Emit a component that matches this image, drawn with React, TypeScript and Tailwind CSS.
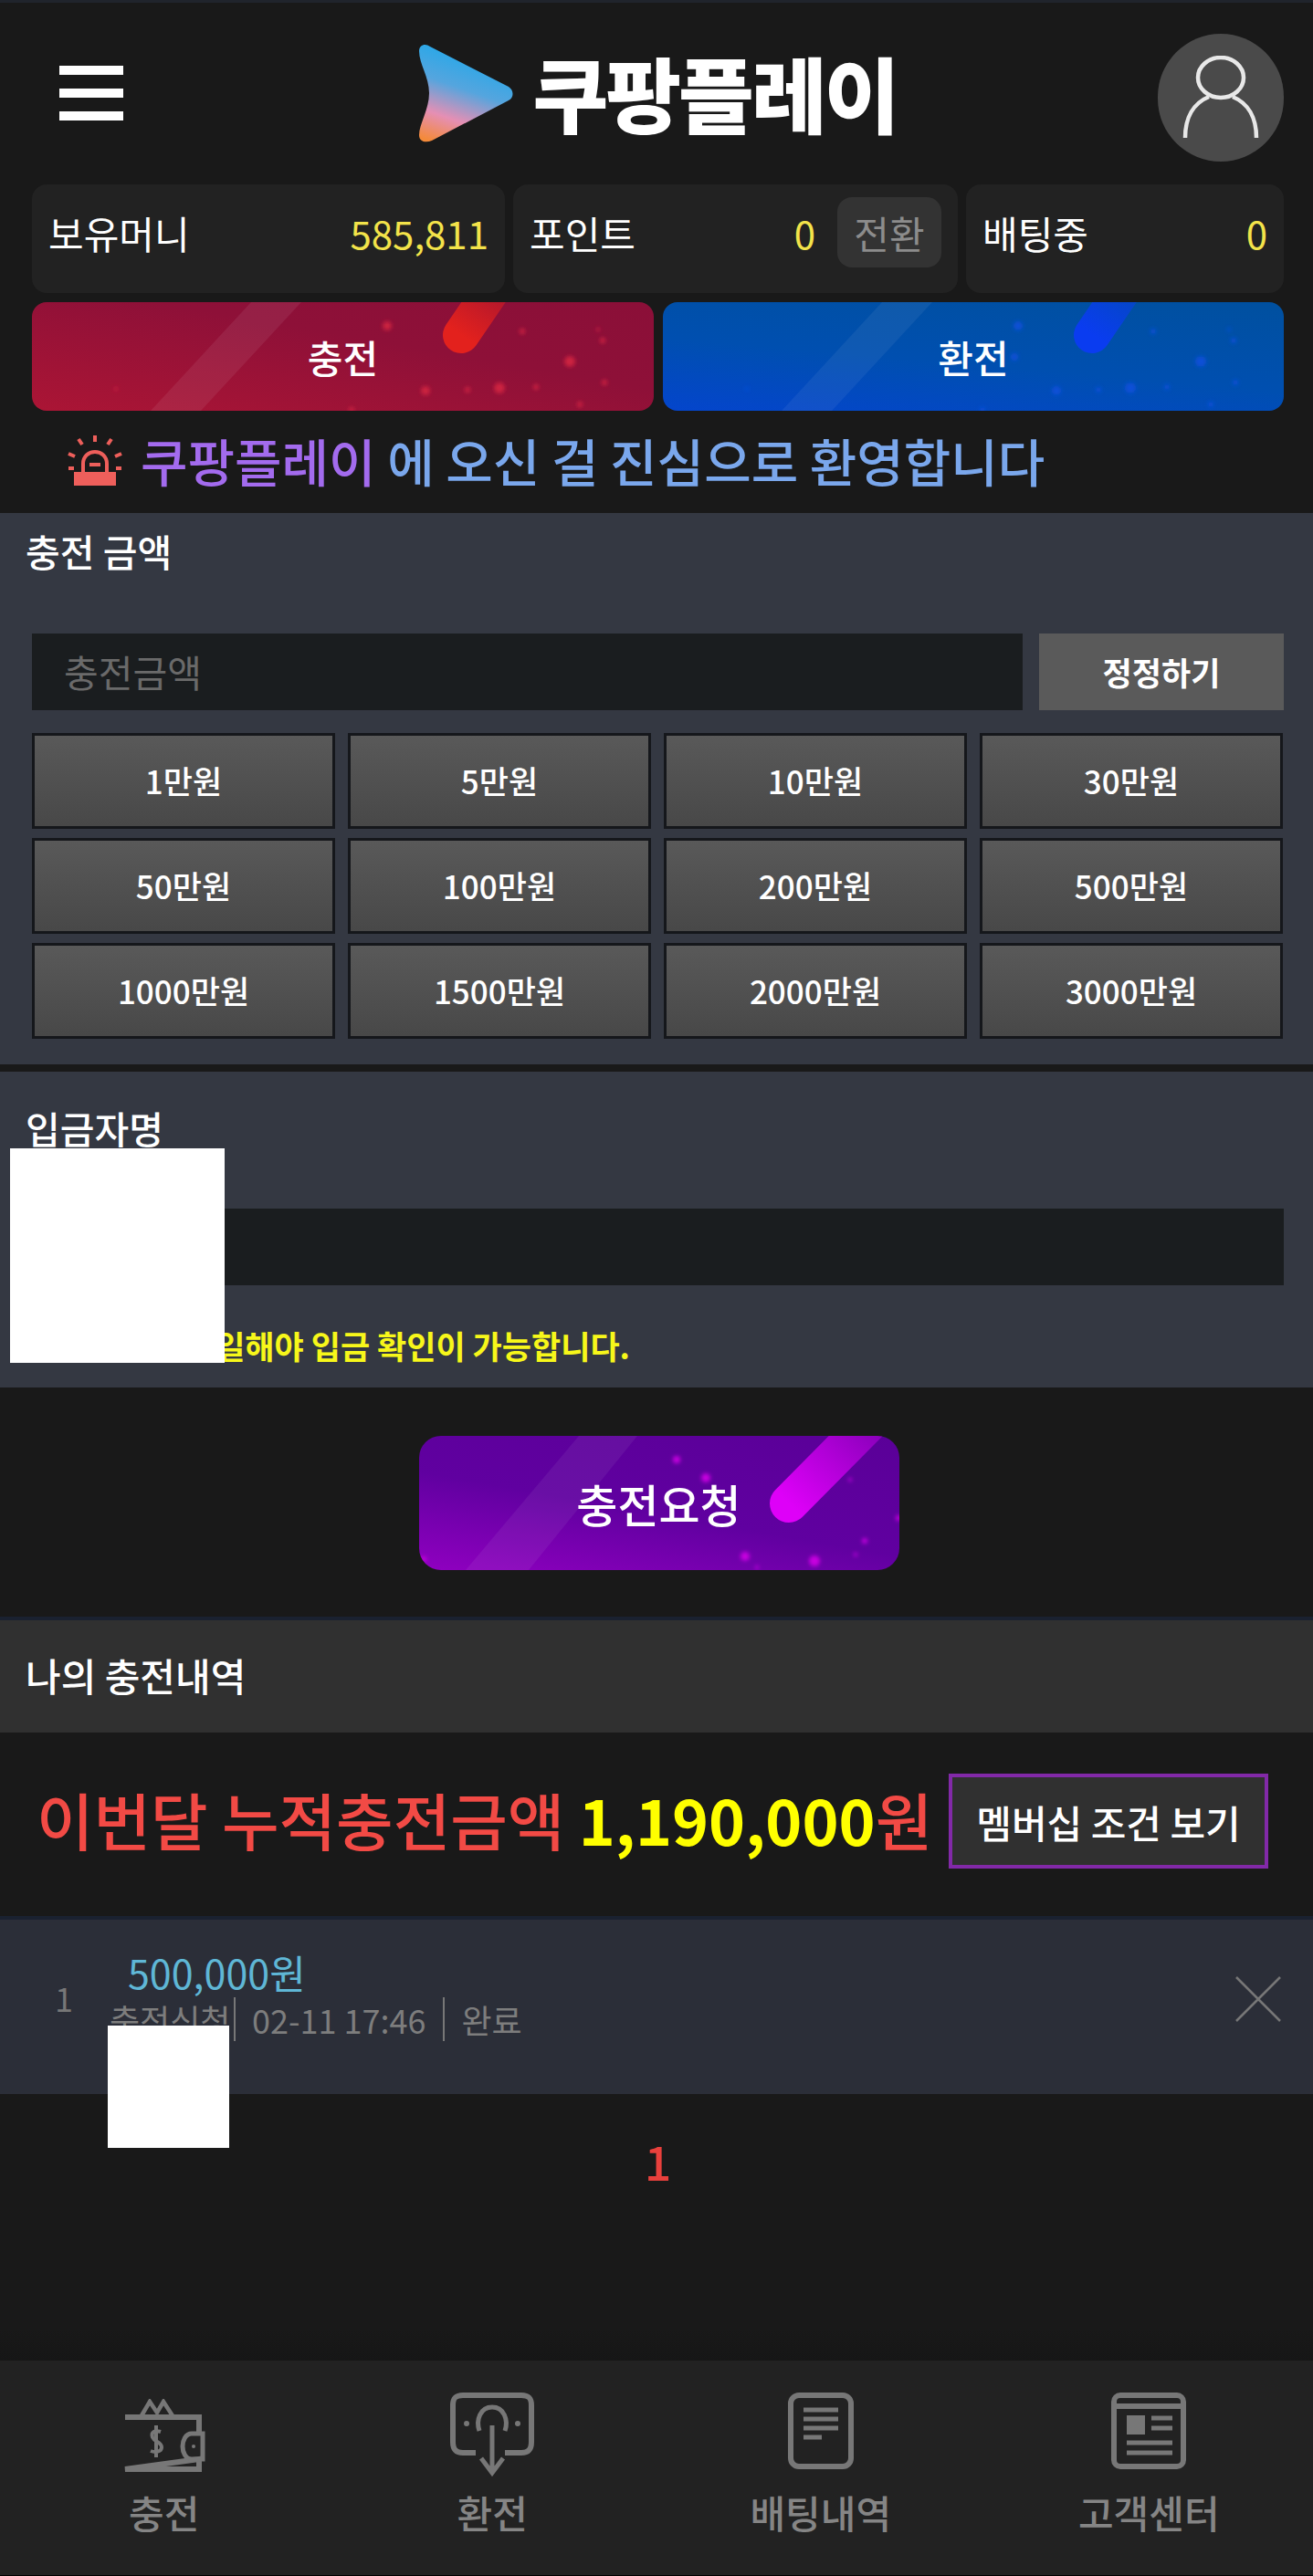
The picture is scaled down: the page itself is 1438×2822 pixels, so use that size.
import React from 'react';

const amounts = ['1만원', '5만원', '10만원', '30만원', '50만원', '100만원', '200만원', '500만원', '1000만원', '1500만원', '2000만원', '3000만원'];

interface SparkleProps {
  id: string;
  w: number;
  h: number;
  glow: string;
  dot: string;
  stripe: [number, number, number, number];
  stripeOpacity: number;
  pill: [number, number, number, number];
  pillWidth: number;
  dots: [number, number, number][];
}

// decoration baked into the coloured buttons
const Sparkle: React.FC<SparkleProps> = ({ id, w, h, glow, dot, stripe, stripeOpacity, pill, pillWidth, dots }) => (
  <svg viewBox={`0 0 ${w} ${h}`} className="absolute inset-0 w-full h-full" aria-hidden="true">
    <defs>
      <linearGradient id={id} x1={pill[0]} y1={pill[1]} x2={pill[2]} y2={pill[3]} gradientUnits="userSpaceOnUse">
        <stop offset="0" stopColor={glow} stopOpacity="0.25" />
        <stop offset="1" stopColor={glow} />
      </linearGradient>
      <filter id={`${id}-b`}>
        <feGaussianBlur stdDeviation="2" />
      </filter>
    </defs>
    <polygon points={`${stripe[0]},${h} ${stripe[1]},${h} ${stripe[3]},0 ${stripe[2]},0`} fill="#ffffff" fillOpacity={stripeOpacity} />
    <line x1={pill[0]} y1={pill[1]} x2={pill[2]} y2={pill[3]} stroke={`url(#${id})`} strokeWidth={pillWidth} strokeLinecap="round" />
    <g filter={`url(#${id}-b)`}>
      {dots.map(([x, y, r], i) => (
        <circle key={i} cx={x} cy={y} r={r} fill={dot} />
      ))}
    </g>
  </svg>
);

const redDots: [number, number, number][] = [[389, 26, 5], [537, 32, 3], [625, 42, 3], [589, 65, 6], [627, 88, 3], [431, 97, 5], [512, 94, 6], [477, 96, 3], [552, 93, 3], [600, 112, 3], [350, 118, 3], [620, 30, 2], [92, 95, 2]];
const blueDots: [number, number, number][] = [[389, 26, 5], [537, 32, 3], [625, 42, 3], [589, 65, 6], [627, 88, 3], [431, 97, 5], [512, 94, 6], [477, 96, 3], [552, 93, 3], [600, 112, 3], [350, 118, 3], [620, 30, 2], [92, 95, 2], [385, 60, 4]];
const purpleDots: [number, number, number][] = [[282, 26, 4], [314, 46, 5], [472, 48, 2], [525, 90, 3], [488, 115, 3], [357, 132, 5], [433, 137, 6], [478, 130, 2], [370, 144, 2], [5, 135, 3]];

const WalletIcon = () => (
  <svg viewBox="0 0 92 80" className="w-[92px] h-[80px]" fill="none" stroke="#777" strokeWidth="6">
    <path d="M20 20 L30 3 L38 15 L45 3 L56 20" strokeWidth="4.5" />
    <path d="M3 20 H84 V38 M84 66 V77 H3 Z" />
    <path d="M88 38 H76 C69 38 66 46 66 52 C66 58 69 66 76 66 H88 Z" strokeWidth="5" />
    <circle cx="78" cy="52" r="2" fill="#777" stroke="none" />
    <path d="M42 36 C36 34 31 36 33 42 C35 47 43 47 43 53 C43 58 36 59 31 57 M37 29 V64" strokeWidth="4" />
  </svg>
);

const ExchangeIcon = () => (
  <svg viewBox="0 0 92 92" className="w-[92px] h-[92px]" fill="none" stroke="#777" strokeWidth="6">
    <path d="M28 66 H14 C6 66 3 62 3 54 V14 C3 6 6 3 14 3 H78 C86 3 89 6 89 14 V54 C89 62 86 66 78 66 H60" />
    <path d="M32 42 C28 30 33 16 46 16 C59 16 64 30 60 42" strokeWidth="5" />
    <path d="M46 36 V86 M34 72 L46 88 L58 72" strokeWidth="5" />
    <circle cx="18" cy="34" r="3" fill="#777" stroke="none" />
    <circle cx="74" cy="34" r="3" fill="#777" stroke="none" />
  </svg>
);

const BetIcon = () => (
  <svg viewBox="0 0 72 84" className="w-[72px] h-[84px]" fill="none" stroke="#777" strokeWidth="6">
    <rect x="3" y="3" width="66" height="78" rx="9" />
    <path d="M17 19 H55 M17 29 H55 M17 39 H55 M17 49 H37" strokeWidth="5" />
  </svg>
);

const NewsIcon = () => (
  <svg viewBox="0 0 82 84" className="w-[82px] h-[84px]" fill="none" stroke="#777" strokeWidth="6">
    <rect x="3" y="3" width="76" height="78" rx="7" />
    <path d="M3 15 H79" />
    <rect x="17" y="25" width="20" height="21" fill="#777" stroke="none" />
    <path d="M44 28 H67 M44 39 H67 M17 55 H67 M17 66 H67" strokeWidth="5" />
  </svg>
);

const tabs = [
  { label: '충전', icon: <WalletIcon />, h: 'pt-[7px]' },
  { label: '환전', icon: <ExchangeIcon />, h: '' },
  { label: '배팅내역', icon: <BetIcon />, h: '' },
  { label: '고객센터', icon: <NewsIcon />, h: '' },
];

const App: React.FC = () => {
  return (
    <div className="relative w-[1438px] h-[2822px] flex flex-col bg-[#191919] text-white overflow-hidden [font-family:'Noto_Sans_CJK_KR','Noto_Sans',sans-serif]">
      {/* Header */}
      <div className="h-[202px] shrink-0 flex items-start justify-between border-t-[3px] border-[#20242c]">
        <div className="ml-[65px] mt-[69px] w-[70px] h-[60px] flex flex-col justify-between">
          <div className="h-[10px] bg-white"></div>
          <div className="h-[10px] bg-white"></div>
          <div className="h-[10px] bg-white"></div>
        </div>
        <div className="mt-[45px] ml-[36px] flex items-start gap-[22px]">
          <svg viewBox="0 0 105 108" className="w-[105px] h-[108px]">
            <defs>
              <linearGradient id="logo" x1="0.45" y1="0.1" x2="0.15" y2="1">
                <stop offset="0" stopColor="#2aa8e8" />
                <stop offset="0.35" stopColor="#55a5de" />
                <stop offset="0.7" stopColor="#e58fb4" />
                <stop offset="1" stopColor="#f48a3a" />
              </linearGradient>
            </defs>
            <path d="M2 8 C2 1 9 -1 14 3 L100 47 C106 51 106 59 100 62 L16 106 C9 109 2 107 2 100 C2 88 13 72 13 54 C13 36 2 22 2 8 Z" fill="url(#logo)" />
          </svg>
          <span className="text-[90px] leading-[100px] font-black tracking-[-3px] mt-[2px] whitespace-nowrap">쿠팡플레이</span>
        </div>
        <div className="mt-[34px] mr-[32px] w-[138px] h-[140px] rounded-full bg-[#4a4a4a] flex items-center justify-center">
          <svg viewBox="0 0 84 92" className="w-[84px] h-[92px]" fill="none" stroke="#e8e8e8" strokeWidth="4.5">
            <ellipse cx="42" cy="24" rx="25" ry="22" />
            <path d="M29 45 C12 52 3 68 3 90 M55 45 C72 52 81 68 81 90" />
          </svg>
        </div>
      </div>

      {/* Balance cards */}
      <div className="shrink-0 flex gap-[9px] pl-[35px] pr-[32px]">
        <div className="w-[518px] h-[119px] rounded-[16px] bg-[#222222] px-[18px] pt-[14px]">
          <div className="h-[77px] flex items-center justify-between text-[42px] leading-none">
            <span>보유머니</span>
            <span className="text-[#f3e34a]">585,811</span>
          </div>
        </div>
        <div className="w-[487px] h-[119px] rounded-[16px] bg-[#222222] pl-[18px] pr-[18px] pt-[14px]">
          <div className="h-[77px] flex items-center text-[42px] leading-none">
            <span>포인트</span>
            <span className="ml-auto text-[#f3e34a]">0</span>
            <span className="ml-[24px] w-[114px] h-[77px] rounded-[16px] bg-[#333333] text-[#8c8c8c] flex items-center justify-center">전환</span>
          </div>
        </div>
        <div className="w-[348px] h-[119px] rounded-[16px] bg-[#222222] px-[18px] pt-[14px]">
          <div className="h-[77px] flex items-center justify-between text-[42px] leading-none">
            <span>배팅중</span>
            <span className="text-[#f3e34a]">0</span>
          </div>
        </div>
      </div>

      {/* Charge / exchange */}
      <div className="shrink-0 flex gap-[10px] pl-[35px] pr-[32px] mt-[10px]">
        <div className="relative w-[681px] h-[119px] rounded-[16px] overflow-hidden bg-[linear-gradient(190deg,#8b0f38_0%,#8e1038_40%,#ab1535_100%)] flex items-center justify-center">
          <Sparkle id="red" w={681} h={119} glow="#e3211d" dot="#cc2340" stripe={[130, 185, 240, 295]} stripeOpacity={0.07} pill={[515, -30, 470, 36]} pillWidth={40} dots={redDots} />
          <span className="relative text-[42px] leading-none font-medium">충전</span>
        </div>
        <div className="relative w-[680px] h-[119px] rounded-[16px] overflow-hidden bg-[linear-gradient(185deg,#00509f_0%,#004fb0_55%,#0445cc_100%)] flex items-center justify-center">
          <Sparkle id="blue" w={680} h={119} glow="#0a3cf0" dot="#0a50d8" stripe={[130, 185, 240, 295]} stripeOpacity={0.06} pill={[515, -30, 470, 36]} pillWidth={40} dots={blueDots} />
          <span className="relative text-[42px] leading-none font-medium">환전</span>
        </div>
      </div>

      {/* Welcome line */}
      <div className="h-[112px] shrink-0 flex items-center pl-[72px] pb-[4px]">
        <svg viewBox="0 0 64 56" className="w-[64px] h-[56px] shrink-0" fill="none" stroke="#ee5f5b" strokeWidth="4">
          <path d="M32 1 V8 M14 5 L18 11 M50 5 L46 11 M3 21 L10 24 M61 21 L54 24 M3 37 H9 M61 37 H55" />
          <path d="M19 42 V32 C19 24 25 19 32 19 C39 19 45 24 45 32 V42" />
          <path d="M26 33 H38" />
          <rect x="11" y="43" width="42" height="11" fill="#ee5f5b" />
        </svg>
        <span className="ml-[18px] text-[56px] leading-none font-medium whitespace-nowrap">
          <span className="text-[#a36bee]">쿠팡플레이</span>
          <span className="text-[#7aa7ec]"> 에 오신 걸 진심으로 환영합니다</span>
        </span>
      </div>

      {/* Amount section */}
      <div className="h-[604px] shrink-0 bg-[#343842] pl-[35px] pr-[32px]">
        <div className="h-[132px] -ml-[7px] pt-[20px] text-[41px] leading-[42px] font-medium">충전 금액</div>
        <div className="flex gap-[18px] h-[84px]">
          <input placeholder="충전금액" className="w-[1085px] bg-[#1a1d1f] px-[35px] text-[41px] outline-none placeholder:text-[#6a6a6a]" readOnly />
          <button className="w-[268px] bg-[#5a5a5a] text-[35px] font-bold">정정하기</button>
        </div>
        <div className="grid grid-cols-4 gap-x-[14px] gap-y-[10px] mt-[25px] w-[1370px]">
          {amounts.map(a => (
            <div key={a} className="h-[105px] border-[3px] border-[#15171b] bg-[linear-gradient(#595959,#484848)] flex items-center justify-center text-[35px] font-medium">
              {a}
            </div>
          ))}
        </div>
      </div>

      <div className="h-[8px] shrink-0"></div>

      {/* Depositor section */}
      <div className="h-[346px] shrink-0 bg-[#343842] pl-[35px] pr-[32px]">
        <div className="h-[150px] -ml-[7px] pt-[40px] text-[41px] leading-[42px] font-medium">입금자명</div>
        <div className="h-[84px] bg-[#1a1d1f]"></div>
        <div className="mt-[46px] text-[35px] leading-[40px] font-bold text-[#f7f71a] whitespace-nowrap">입금자명과 동일해야 입금 확인이 가능합니다.</div>
      </div>

      <div className="h-[251px] shrink-0 flex justify-center pt-[53px] pl-[5px]">
        <div className="relative w-[526px] h-[147px] rounded-[24px] overflow-hidden bg-[linear-gradient(190deg,#5a0098_0%,#6000a0_55%,#9000c0_100%)] flex items-center justify-center">
          <Sparkle id="purple" w={526} h={147} glow="#de00f8" dot="#c800e0" stripe={[51, 120, 175, 239]} stripeOpacity={0.06} pill={[508, -30, 405, 74]} pillWidth={42} dots={purpleDots} />
          <span className="relative text-[49px] leading-none font-medium">충전요청</span>
        </div>
      </div>

      {/* History */}
      <div className="h-[127px] shrink-0 bg-[#303030] border-t-[4px] border-[#1a2130] flex items-center pl-[28px] pb-[4px] text-[42px] font-medium">나의 충전내역</div>
      <div className="h-[201px] shrink-0 flex items-start pl-[40px] pt-[45px] pr-[49px]">
        <span className="text-[68px] leading-[100px] whitespace-nowrap font-medium text-[#f24a45]">
          이번달 누적충전금액 <span className="font-bold text-[#ffff00]">1,190,000</span>원
        </span>
        <div className="ml-auto w-[350px] h-[104px] bg-[#303030] border-[4px] border-[#8229a8] flex items-center justify-center text-[42px] font-medium whitespace-nowrap">
          멤버십 조건 보기
        </div>
      </div>

      <div className="h-[195px] shrink-0 bg-[#2b2e38] border-t-[4px] border-[#1a2130] flex">
        <div className="w-[140px] pl-[60px] pt-[60px] text-[36px] leading-[50px] text-[#777777]">1</div>
        <div className="flex-1 pt-[32px]">
          <div className="text-[43px] leading-[50px] text-[#5fb7d6]">500,000원</div>
          <div className="mt-[3px] flex items-center text-[36px] leading-[48px] text-[#7d7d7d] -ml-[20px] h-[48px]">
            <span className="w-[136px] whitespace-nowrap">충전신청</span>
            <span className="border-l-2 border-[#777777] pl-[18px] pr-[19px]">02-11 17:46</span>
            <span className="border-l-2 border-[#777777] pl-[18px]">완료</span>
          </div>
        </div>
        <svg viewBox="0 0 50 50" className="w-[50px] h-[50px] mt-[62px] mr-[35px]" fill="none" stroke="#777777" strokeWidth="2.5">
          <path d="M1 1 L49 49 M49 1 L1 49" />
        </svg>
      </div>

      <div className="flex-1 bg-[linear-gradient(#191919_88%,#161616)] pt-[43px] pl-[3px] text-center text-[52px] leading-[60px] font-medium text-[#e8403c]">1</div>

      {/* Bottom tabs */}
      <div className="h-[236px] shrink-0 bg-[#222222] grid grid-cols-4 border-b border-black">
        {tabs.map(t => (
          <div key={t.label} className="flex flex-col items-center pt-[35px]">
            <div className={`h-[92px] ${t.h}`}>{t.icon}</div>
            <div className="mt-[16px] text-[42px] leading-[46px] font-medium text-[#858585]">{t.label}</div>
          </div>
        ))}
      </div>

      {/* redacted blocks in the source image */}
      <div className="absolute left-[11px] top-[1258px] w-[235px] h-[235px] bg-white"></div>
      <div className="absolute left-[118px] top-[2219px] w-[133px] h-[134px] bg-white"></div>
    </div>
  );
};

export default App;
